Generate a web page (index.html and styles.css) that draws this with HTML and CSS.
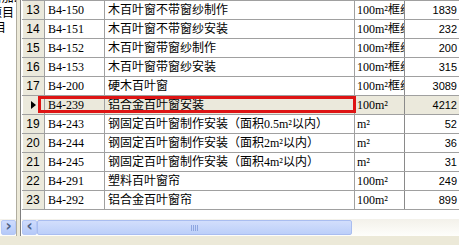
FILE: index.html
```html
<!DOCTYPE html>
<html>
<head>
<meta charset="utf-8">
<link rel="stylesheet" href="styles.css">
</head>
<body>
<div class="screen">
  <div class="main">
    <div class="tree">
      <div class="tree-body">
        <div class="tl tl1">增加.</div>
        <div class="tl tl2">项目</div>
        <div class="tl tl3">项目</div>
      </div>
      <div class="hscroll tree-scroll">
        <div class="track"></div>
        <div class="sbtn">›</div>
      </div>
    </div>
    <div class="gap"></div>
    <div class="pane">
      <div class="grid">
        <div class="row"><div class="rh">13</div><div class="c code">B4-150</div><div class="c name">木百叶窗不带窗纱制作</div><div class="c unit">100m²框纱</div><div class="c qty">1839</div></div>
        <div class="row"><div class="rh">14</div><div class="c code">B4-151</div><div class="c name">木百叶窗不带窗纱安装</div><div class="c unit">100m²框纱</div><div class="c qty">232</div></div>
        <div class="row"><div class="rh">15</div><div class="c code">B4-152</div><div class="c name">木百叶窗带窗纱制作</div><div class="c unit">100m²框纱</div><div class="c qty">200</div></div>
        <div class="row"><div class="rh">16</div><div class="c code">B4-153</div><div class="c name">木百叶窗带窗纱安装</div><div class="c unit">100m²框纱</div><div class="c qty">315</div></div>
        <div class="row"><div class="rh">17</div><div class="c code">B4-200</div><div class="c name">硬木百叶窗</div><div class="c unit">100m²框纱</div><div class="c qty">3089</div></div>
        <div class="row sel"><div class="rh"><span class="num">18</span><span class="arrow"></span></div><div class="c code">B4-239</div><div class="c name">铝合金百叶窗安装</div><div class="c unit">100m²</div><div class="c qty">4212</div><div class="focus"></div></div>
        <div class="row"><div class="rh">19</div><div class="c code">B4-243</div><div class="c name">钢固定百叶窗制作安装（面积0.5m²以内）</div><div class="c unit">m²</div><div class="c qty">52</div></div>
        <div class="row"><div class="rh">20</div><div class="c code">B4-244</div><div class="c name">钢固定百叶窗制作安装（面积2m²以内）</div><div class="c unit">m²</div><div class="c qty">36</div></div>
        <div class="row"><div class="rh">21</div><div class="c code">B4-245</div><div class="c name">钢固定百叶窗制作安装（面积4m²以内）</div><div class="c unit">m²</div><div class="c qty">31</div></div>
        <div class="row"><div class="rh">22</div><div class="c code">B4-291</div><div class="c name">塑料百叶窗帘</div><div class="c unit">100m²</div><div class="c qty">249</div></div>
        <div class="row"><div class="rh">23</div><div class="c code">B4-292</div><div class="c name">铝合金百叶窗帘</div><div class="c unit">100m²</div><div class="c qty">899</div></div>
      </div>
      <div class="hscroll grid-scroll">
        <div class="sbtn">‹</div>
        <div class="thumb"><span class="grip"></span></div>
        <div class="track"></div>
      </div>
    </div>
  </div>
  <div class="status"></div>
</div>
</body>
</html>
```

FILE: styles.css
```css
html, body {
  margin: 0;
  padding: 0;
  background: #ece9d8;
}
.screen {
  width: 459px;
  height: 245px;
  overflow: hidden;
  display: flex;
  flex-direction: column;
  font-family: "Liberation Serif", "Noto Sans CJK SC", serif;
  font-size: 12px;
  color: #000;
}
.main {
  height: 236px;
  display: flex;
}
.status {
  height: 9px;
  background: #ece9d8;
}

/* left tree */
.tree {
  width: 16px;
  border-right: 1px solid #b0ada0;
  background: #fff;
  display: flex;
  flex-direction: column;
  overflow: hidden;
}
.tree-body {
  flex: 1;
  overflow: hidden;
  font-family: "Noto Sans CJK SC", sans-serif;
  font-size: 12px;
  line-height: 15px;
}
.tl {
  display: flex;
  justify-content: flex-end;
  white-space: nowrap;
}
.tl1 { margin-top: -11px; margin-right: -1px; }
.tl2 { margin-right: 2px; }
.tl3 { margin-right: 10px; }

.gap {
  width: 3px;
  background: #ece9d8;
}

/* grid pane */
.pane {
  flex: 1;
  border-left: 1px solid #7f7f7f;
  padding-left: 1px;
  background: #fff;
  display: flex;
  flex-direction: column;
  overflow: hidden;
}
.grid {
  height: 219px;
  border-top: 1px solid #a0a0a0;
  box-sizing: border-box;
  overflow: hidden;
}
.row {
  position: relative;
  display: flex;
  height: 19px;
  box-sizing: border-box;
  border-bottom: 1px solid #a0a0a0;
  line-height: 18px;
}
.rh {
  position: relative;
  width: 23px;
  flex: none;
  box-sizing: border-box;
  border-right: 1px solid #a0a0a0;
  background: #ebe9dc;
  box-shadow: inset 1px 0 0 #fff;
  text-align: center;
  font-family: "Liberation Sans", sans-serif;
  font-size: 12px;
}
.c {
  flex: none;
  box-sizing: border-box;
  border-right: 1px solid #a0a0a0;
  padding-left: 3px;
  white-space: nowrap;
  overflow: hidden;
}
.code { width: 60px; }
.name {
  width: 250px;
  font-family: "Liberation Serif", "Noto Sans CJK SC", sans-serif;
  font-size: 12px;
  padding-left: 3px;
}
.unit {
  width: 50px;
  font-family: "Liberation Serif", "Noto Sans CJK SC", serif;
  padding-left: 2px;
  border-right-color: #8a8a8a;
}
.qty {
  width: 54px;
  border-right: none;
  text-align: right;
  padding-right: 2px;
  font-family: "Liberation Sans", sans-serif;
  font-size: 11px;
}
.sel .c { background: #ebe9dc; }
.sel .num { visibility: hidden; }
.arrow {
  position: absolute;
  left: 9px;
  top: 5px;
  width: 0;
  height: 0;
  border-top: 4px solid transparent;
  border-bottom: 4px solid transparent;
  border-left: 5px solid #000;
}
.focus {
  position: absolute;
  left: 16px;
  top: 0;
  width: 318px;
  height: 17px;
  box-sizing: border-box;
  border: 3px solid #de1414;
}

/* scrollbars */
.hscroll {
  height: 17px;
  display: flex;
  background: linear-gradient(#f3f1ea, #fefefb);
  box-sizing: border-box;
  padding: 1px 0;
}
.track { flex: 1; }
.sbtn {
  width: 15px;
  height: 15px;
  box-sizing: border-box;
  border: 1px solid #b5c8f5;
  border-radius: 2px;
  background: linear-gradient(#cfdcfd, #b5c9f8);
  color: #4d6185;
  font-family: "DejaVu Sans", sans-serif;
  font-weight: bold;
  font-size: 15px;
  line-height: 11px;
  text-align: center;
}
.thumb {
  width: 315px;
  height: 15px;
  box-sizing: border-box;
  border: 1px solid #a9bdf0;
  border-radius: 2px;
  background: linear-gradient(#d2defc, #bccff9);
  display: flex;
  align-items: center;
  justify-content: center;
}
.grip {
  width: 7px;
  height: 6px;
  background: repeating-linear-gradient(90deg, #8ea6e0 0 1px, transparent 1px 2px);
}
```
